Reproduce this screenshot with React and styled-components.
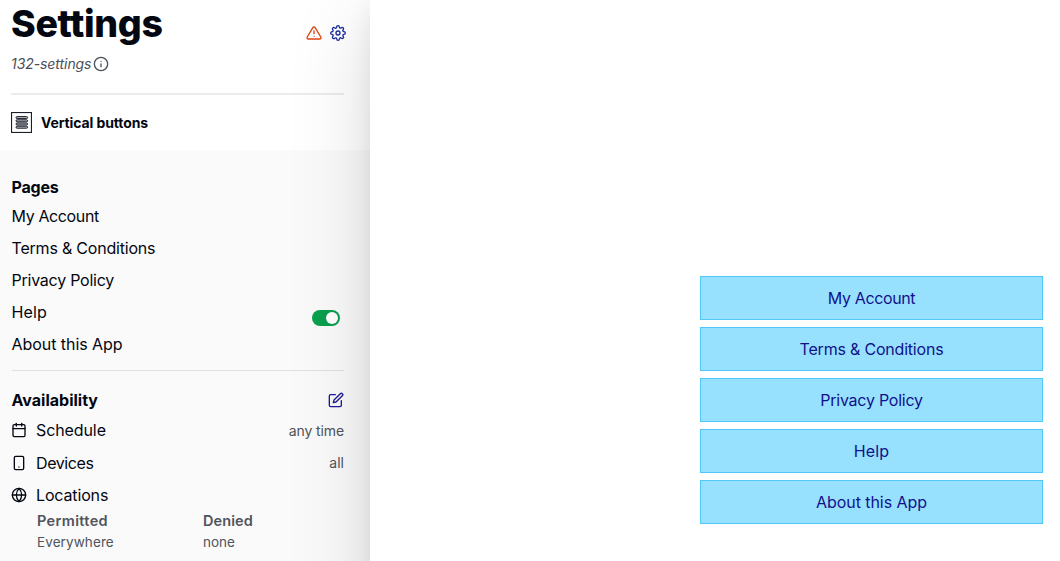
import React from "react";
import styled, { createGlobalStyle } from "styled-components";
import {
  FiAlertTriangle,
  FiSettings,
  FiInfo,
  FiEdit,
  FiCalendar,
  FiSmartphone,
  FiGlobe,
} from "react-icons/fi";

const GlobalStyle = createGlobalStyle`
  *, *::before, *::after { box-sizing: border-box; }
  body { margin: 0; background: #fff; font-family: Inter, "Liberation Sans", sans-serif; color: #030712; overflow: hidden; }
  h1, h2, p, ul, dl, dt, dd { margin: 0; padding: 0; }
  ul { list-style: none; }
  svg { display: block; flex: none; }
`;

const Screen = styled.div`
  display: flex;
  width: 1060px;
  height: 561px;
  overflow: hidden;
`;

const Sidebar = styled.aside`
  width: 370px;
  flex: none;
  display: flex;
  flex-direction: column;
  background: #fafafa;
`;

const Header = styled.header`
  height: 150px;
  flex: none;
  padding: 0 26px 0 11px;
  background: #fff;
`;

const Summary = styled.div`
  height: 95px;
  border-bottom: 2px solid #ebecee;
`;

const TitleRow = styled.div`
  display: flex;
  justify-content: space-between;
  height: 48px;
`;

const Title = styled.h1`
  font-size: 37.5px;
  line-height: 48px;
  font-weight: 800;
  letter-spacing: -0.35px;
`;

const Actions = styled.div`
  display: flex;
  gap: 8px;
  padding-top: 25px;
  margin-right: -2px;
`;

const Identifier = styled.div`
  display: flex;
  align-items: center;
  gap: 2px;
  height: 31px;
  font-size: 14px;
  font-style: italic;
  color: #4b4f58;
`;

const Label = styled.span`
  white-space: nowrap;
  letter-spacing: ${(p) => p.$tracking || 0}px;
`;

const Kind = styled.div`
  display: flex;
  align-items: center;
  gap: 9px;
  height: 55px;
  font-size: 14px;
  font-weight: 700;
`;

const Section = styled.section`
  margin: 0 26px 0 11.5px;
  padding-top: ${(p) => p.$top}px;
  border-bottom: ${(p) => (p.$divided ? "1px solid #dfe0e2" : "none")};
`;

const SectionHead = styled.div`
  display: flex;
  align-items: center;
  justify-content: space-between;
  height: ${(p) => p.$height || 26}px;
`;

const SectionTitle = styled.h2`
  font-size: 16px;
  line-height: 26px;
  font-weight: 700;
`;

const PagesBody = styled.div`
  display: flex;
  justify-content: space-between;
  padding-bottom: 10px;
`;

const PageItem = styled.li`
  font-size: 16px;
  line-height: 32px;
  white-space: nowrap;
`;

const Switch = styled.button`
  display: flex;
  justify-content: flex-end;
  width: 28px;
  height: 16px;
  margin: 110px 4px 0 0;
  padding: 2px;
  border: 0;
  border-radius: 8px;
  background: #0a9f4f;
`;

const Knob = styled.span`
  width: 12px;
  height: 12px;
  border-radius: 50%;
  background: #fff;
`;

const Row = styled.div`
  display: flex;
  align-items: center;
  height: 32.4px;
  margin-left: -0.5px;
  font-size: 16px;
`;

const RowLabel = styled.span`
  flex: 1;
  margin-left: 9px;
`;

const Value = styled.span`
  font-size: 14px;
  color: #4f535c;
`;

const Places = styled.dl`
  display: grid;
  grid-template-columns: 166px 1fr;
  padding-left: 25.5px;
  color: #50545d;
`;

const PlaceTitle = styled.dt`
  font-size: 14.5px;
  line-height: 20px;
  font-weight: 600;
`;

const PlaceValue = styled.dd`
  font-size: 13.5px;
  line-height: 22px;
`;

const Canvas = styled.main`
  flex: 1;
  height: 700px;
  display: flex;
  flex-direction: column;
  gap: 7px;
  padding: 276px 17px 0 330px;
  background: #fff;
  box-shadow: 0 10px 22px rgba(0, 0, 0, 0.08), 0 20px 80px rgba(0, 0, 0, 0.14);
`;

const PageButton = styled.button`
  flex: none;
  height: 44px;
  padding: 0;
  border: 1px solid #4fc9fa;
  background: #97e1ff;
  color: #11118c;
  font-family: inherit;
  font-size: 16px;
`;

const VerticalButtonsIcon = () => (
  <svg width="21" height="21" viewBox="0 0 21 21" fill="none" stroke="#1b1f2a">
    <rect x="0.5" y="0.5" width="20" height="20" strokeWidth="1.2" />
    {[4.6, 7.8, 11, 14.2].map((y) => (
      <rect key={y} x="5" y={y} width="11.6" height="2" rx="1" fill="#b5b7bb" strokeWidth="1" />
    ))}
  </svg>
);

const pages = [
  { name: "My Account", tracking: -0.37 },
  { name: "Terms & Conditions", tracking: -0.2 },
  { name: "Privacy Policy", tracking: -0.24 },
  { name: "Help", tracking: 0.1 },
  { name: "About this App", tracking: -0.05 },
];

export default function App() {
  return (
    <>
      <GlobalStyle />
      <Screen>
        <Sidebar>
          <Header>
            <Summary>
              <TitleRow>
                <Title>Settings</Title>
                <Actions>
                  <FiAlertTriangle size={16} color="#de4310" />
                  <FiSettings size={16} color="#1c2da0" />
                </Actions>
              </TitleRow>
              <Identifier>
                <Label $tracking={-0.07}>132-settings</Label>
                <FiInfo size={16} />
              </Identifier>
            </Summary>
            <Kind>
              <VerticalButtonsIcon />
              <Label $tracking={-0.11}>Vertical buttons</Label>
            </Kind>
          </Header>
          <Section $top={24} $divided>
            <SectionHead>
              <SectionTitle><Label $tracking={-0.2}>Pages</Label></SectionTitle>
            </SectionHead>
            <PagesBody>
              <ul>
                {pages.map((p) => (
                  <PageItem key={p.name}><Label $tracking={p.tracking}>{p.name}</Label></PageItem>
                ))}
              </ul>
              <Switch aria-label="Pages enabled"><Knob /></Switch>
            </PagesBody>
          </Section>
          <Section $top={14}>
            <SectionHead $height={29}>
              <SectionTitle><Label>Availability</Label></SectionTitle>
              <FiEdit size={16} color="#1a1a9a" />
            </SectionHead>
            <Row>
              <FiCalendar size={16} />
              <RowLabel><Label $tracking={-0.1}>Schedule</Label></RowLabel>
              <Value><Label $tracking={-0.1}>any time</Label></Value>
            </Row>
            <Row>
              <FiSmartphone size={16} />
              <RowLabel><Label $tracking={-0.4}>Devices</Label></RowLabel>
              <Value><Label>all</Label></Value>
            </Row>
            <Row>
              <FiGlobe size={16} />
              <RowLabel><Label $tracking={-0.15}>Locations</Label></RowLabel>
            </Row>
            <Places>
              <PlaceTitle><Label $tracking={0.35}>Permitted</Label></PlaceTitle>
              <PlaceTitle><Label $tracking={0.1}>Denied</Label></PlaceTitle>
              <PlaceValue><Label $tracking={0.1}>Everywhere</Label></PlaceValue>
              <PlaceValue><Label>none</Label></PlaceValue>
            </Places>
          </Section>
        </Sidebar>
        <Canvas>
          {pages.map((p) => (
            <PageButton key={p.name}><Label $tracking={p.tracking}>{p.name}</Label></PageButton>
          ))}
        </Canvas>
      </Screen>
    </>
  );
}
